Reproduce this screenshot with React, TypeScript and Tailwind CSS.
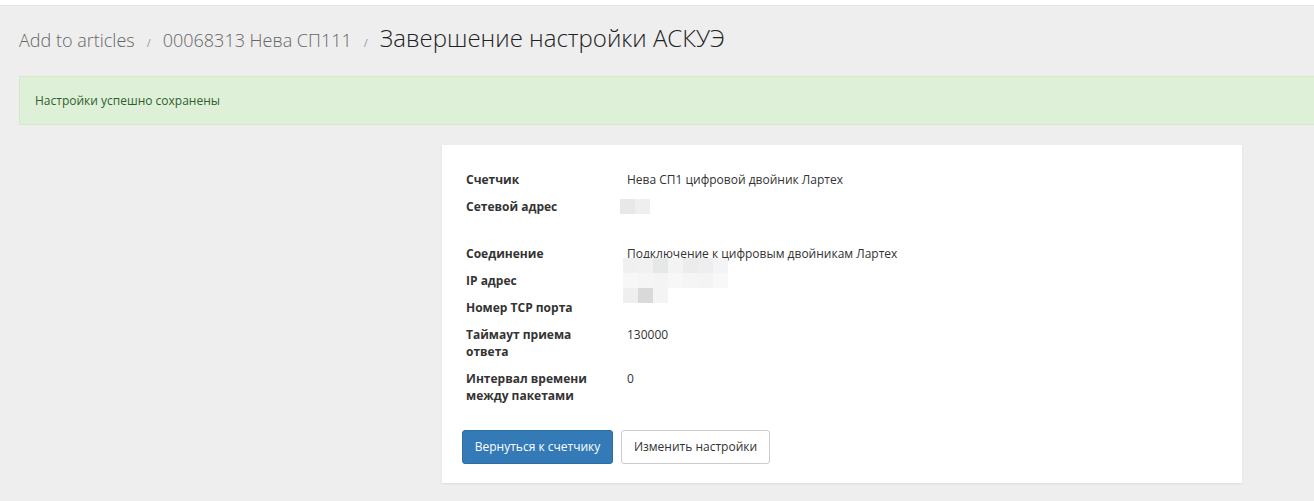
import React from "react";

const Blur = ({ rows }: { rows: string[][] }) => (
  <div className="flex flex-col">
    {rows.map((r, i) => (
      <div key={i} className="flex">
        {r.map((c, j) => (
          <div key={j} className="w-[15px] h-[15px]" style={{ background: c }} />
        ))}
      </div>
    ))}
  </div>
);

const Row = ({ label, children, extra = "" }: { label: React.ReactNode; children?: React.ReactNode; extra?: string }) => (
  <div className={`flex ${extra}`}>
    <div className="w-[161px] shrink-0 font-bold text-[#333] leading-[17px]">{label}</div>
    <div className="leading-[17px] text-[#333]">{children}</div>
  </div>
);

export default function App() {
  return (
    <div className="min-h-[501px] bg-[#eeeeee] text-[12px] overflow-hidden" style={{ fontFamily: '"Open Sans", "Noto Sans", sans-serif' }}>
      <div className="h-[6px] bg-white border-b border-[#e5e5e5]" />
      <div className="pl-[19px] pt-[14px] h-[70px] flex items-baseline gap-[10px]">
        <span className="text-[18px] font-light text-[#666]">Add to articles</span>
        <span className="text-[11px] text-[#999] px-[2px]">/</span>
        <span className="text-[18px] font-light text-[#666]">00068313 Нева СП111</span>
        <span className="text-[11px] text-[#999] px-[2px]">/</span>
        <span className="text-[24px] font-light text-[#222]">Завершение настройки АСКУЭ</span>
      </div>
      <div className="ml-[19px] -mr-[20px] h-[49px] bg-[#dff0d8] border border-[#d6e9c6] flex items-center pl-[15px] text-[#2f5f2f]">
        Настройки успешно сохранены
      </div>
      <div className="pl-[442px] pt-[20px] pb-[19px]">
        <div className="w-[800px] bg-white shadow-[0_1px_2px_rgba(0,0,0,0.08)] pl-[24px] pt-[26px] pb-[19px]">
          <div className="flex flex-col gap-[10px]">
            <Row label="Счетчик">Нева СП1 цифровой двойник Лартех</Row>
            <Row label="Сетевой адрес">
              <div className="-ml-[7px] mt-[1px]">
                <Blur rows={[["#e9e8e8", "#eeeff1"]]} />
              </div>
            </Row>
            <Row label="Соединение" extra="mt-[20px]">Подключение к цифровым двойникам Лартех</Row>
            <Row label="IP адрес">
              <div className="-ml-[4px] -mt-[14px] h-[17px]">
                <Blur
                  rows={[
                    ["#f0f0f0", "#f1f1f2", "#e6e7e7", "#f3f3f4", "#ececec", "#eeeeee", "#f4f4f6"],
                    ["#f7f7f7", "#f5f5f6", "#f4f4f4", "#f7f7f8", "#f5f5f6", "#f4f4f5", "#f8f8f9"],
                  ]}
                />
              </div>
            </Row>
            <Row label="Номер TCP порта">
              <div className="-ml-[4px] -mt-[11px] h-[17px]">
                <Blur rows={[["#efefef", "#d9d9d9", "#f4f4f4"]]} />
              </div>
            </Row>
            <Row label={<>Таймаут приема<br />ответа</>}>130000</Row>
            <Row label={<>Интервал времени<br />между пакетами</>}>0</Row>
          </div>
          <div className="flex gap-[8px] mt-[26px] -ml-[4px]">
            <button className="h-[34px] w-[151px] bg-[#337ab7] border border-[#2e6da4] rounded-[3px] text-white text-[12px]">
              Вернуться к счетчику
            </button>
            <button className="h-[34px] w-[149px] bg-white border border-[#ccc] rounded-[3px] text-[#333] text-[12px]">
              Изменить настройки
            </button>
          </div>
        </div>
      </div>
    </div>
  );
}
